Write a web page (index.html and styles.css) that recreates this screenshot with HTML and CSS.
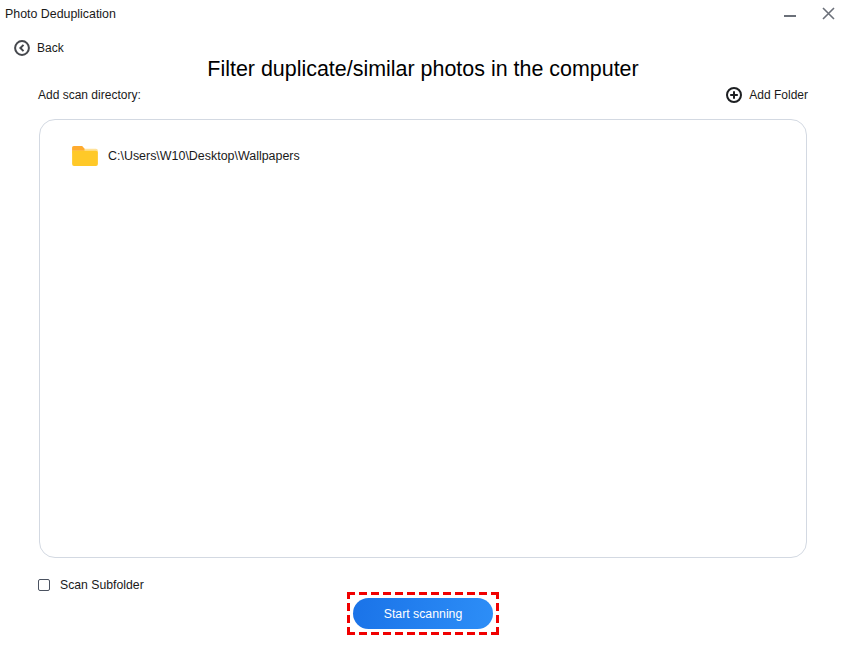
FILE: index.html
```html
<!DOCTYPE html>
<html lang="en">
<head>
  <meta charset="UTF-8" />
  <title>Photo Deduplication</title>
  <link rel="stylesheet" href="styles.css">
</head>
<body>
  <div class="window">
    <div class="titlebar">
      <span class="app-name">Photo Deduplication</span>
      <div class="win-btns">
        <svg width="13" height="13" viewBox="0 0 13 13"><path d="M1 9h12" stroke="#6b7079" stroke-width="2"/></svg>
        <svg width="13" height="13" viewBox="0 0 13 13"><path d="M1 1l11 11M12 1L1 12" stroke="#6b7079" stroke-width="1.6" fill="none"/></svg>
      </div>
    </div>

    <div class="back">
      <svg width="16" height="16" viewBox="0 0 16 16"><circle cx="8" cy="8" r="6.900" fill="none" stroke="#45484d" stroke-width="2"/><path d="M9.500 4.900L6.400 8l3.100 3.100" fill="none" stroke="#45484d" stroke-width="2"/></svg>
      <span>Back</span>
    </div>

    <h1>Filter duplicate/similar photos in the computer</h1>

    <div class="dir-row">
      <span>Add scan directory:</span>
      <div class="add-folder">
        <svg width="16" height="16" viewBox="0 0 16 16"><circle cx="8" cy="8" r="7" fill="none" stroke="#1d1f22" stroke-width="2"/><path d="M8 4.200v7.600M4.200 8h7.600" stroke="#1d1f22" stroke-width="2"/></svg>
        <span>Add Folder</span>
      </div>
    </div>

    <div class="panel">
      <div class="folder-item">
        <svg width="26" height="21" viewBox="0 0 27 22"><path d="M0 3a2 2 0 0 1 2-2h8l3 3h12a2 2 0 0 1 2 2v3H0z" fill="#ffe29a"/><path d="M0 3a2 2 0 0 1 2-2h8.500l2.500 3v2H0z" fill="#ffab2e"/><path d="M0 6h25a2 2 0 0 1 2 2v12a2 2 0 0 1-2 2H2a2 2 0 0 1-2-2z" fill="#ffc928"/></svg>
        <span class="folder-path">C:\Users\W10\Desktop\Wallpapers</span>
      </div>
    </div>

    <label class="subfolder">
      <span class="checkbox"></span>
      <span class="subfolder-text">Scan Subfolder</span>
    </label>

    <div class="action">
      <div class="highlight">
        <button class="btn-start">Start scanning</button>
      </div>
    </div>
  </div>
</body>
</html>
```

FILE: styles.css
```css
* { box-sizing: border-box; margin: 0; padding: 0; }
body {
  background: #fff;
  color: #1a1a1a;
  font-family: "Liberation Sans", Arial, sans-serif;
  font-size: 12px;
  overflow: hidden;
}
.window {
  width: 846px;
  height: 646px;
  display: flex;
  flex-direction: column;
}
.titlebar {
  height: 37px;
  padding: 7px 11px 0 5px;
  display: flex;
  justify-content: space-between;
  align-items: flex-start;
}
.app-name { font-size: 12.4px; }
.win-btns {
  display: flex;
  gap: 26px;
}
.back {
  height: 22px;
  margin-left: 14px;
  display: flex;
  align-items: center;
  gap: 7px;
}
h1 {
  height: 26px;
  margin-top: -3px;
  font-size: 21.45px;
  font-weight: normal;
  line-height: 26px;
  text-align: center;
  color: #000;
}
.dir-row {
  height: 26px;
  margin: 0 38px 11px;
  display: flex;
  justify-content: space-between;
  align-items: center;
}
.add-folder {
  display: flex;
  align-items: center;
  gap: 7px;
}
.panel {
  height: 439px;
  margin: 0 39px;
  padding: 25px 32px;
  border: 1px solid #d3d9e2;
  border-radius: 16px;
}
.folder-item {
  display: flex;
  align-items: center;
  gap: 10px;
}
.folder-path { font-size: 12.45px; }
.subfolder {
  height: 16px;
  margin: 19px 0 0 38px;
  display: flex;
  align-items: center;
  gap: 10px;
}
.subfolder-text { font-size: 12.25px; }
.checkbox {
  width: 12px;
  height: 12px;
  border: 1px solid #4a5260;
  border-radius: 2px;
}
.action {
  display: flex;
  justify-content: center;
  margin-top: -1px;
}
/* long dashes, a plain dashed border draws them too short */
.highlight {
  width: 152px;
  height: 43px;
  padding: 6px 6px;
  background:
    repeating-linear-gradient(90deg, #f00000 0 8px, transparent 8px 12px) top / 100% 3px no-repeat,
    repeating-linear-gradient(90deg, #f00000 0 8px, transparent 8px 12px) bottom / 100% 3px no-repeat,
    repeating-linear-gradient(0deg, #f00000 0 8px, transparent 8px 12px) left / 3px 100% no-repeat,
    repeating-linear-gradient(0deg, #f00000 0 8px, transparent 8px 12px) right / 3px 100% no-repeat;
}
.btn-start {
  display: block;
  width: 140px;
  height: 31px;
  border: none;
  border-radius: 16px;
  background: linear-gradient(100deg, #1a73e8, #2d8ef7);
  color: #fff;
  font-family: inherit;
  font-size: 12.3px;
}
```
